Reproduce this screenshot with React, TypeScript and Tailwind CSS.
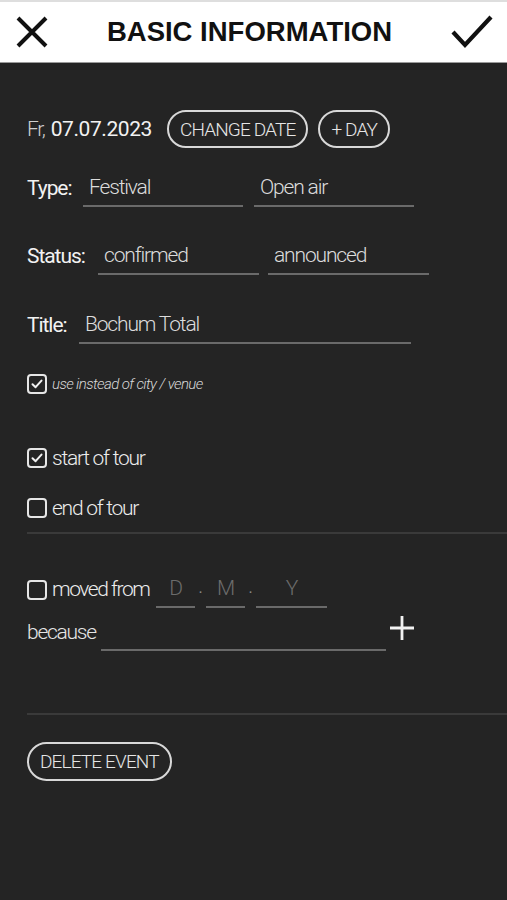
import React from "react";

function Checkbox({ checked }: { checked?: boolean }) {
  return (
    <div className="w-[20px] h-[20px] rounded-[4px] border-2 border-[#e6e6e6] flex items-center justify-center shrink-0">
      {checked && (
        <svg width="14" height="14" viewBox="0 0 14 14" fill="none">
          <path d="M2.5 7.2 L5.6 10.2 L11.5 3.6" stroke="#f0f0f0" strokeWidth="2" strokeLinecap="round" strokeLinejoin="round" />
        </svg>
      )}
    </div>
  );
}

function Field({ w, text, placeholder, center }: { w: string; text?: string; placeholder?: string; center?: boolean }) {
  return (
    <div className={`${w} h-[37px] border-b-2 border-[#6a6a6a] flex items-center ${center ? "justify-center" : "pl-[6px]"} text-[21px] leading-none font-light ${placeholder ? "text-[#6c6c6c]" : "text-[#dcdcdc]"} tracking-[-0.055em]`}>
      {text ?? placeholder}
    </div>
  );
}

const pill =
  "h-[38px] px-[10px] rounded-full border-2 border-[#d8d8d8] flex items-center text-[19px] leading-none font-light text-[#e6e6e6] tracking-[-0.045em]";

export default function App() {
  return (
    <div className="w-[507px] h-[900px] bg-[#242424] overflow-hidden" style={{ fontFamily: "Roboto, 'Liberation Sans', sans-serif" }}>
      {/* Header */}
      <div className="h-[63px] bg-white border-t-2 border-b border-t-[#dedede] border-b-[#9a9a9a] flex items-center justify-between pl-[16px] pr-[14px]">
        <svg width="32" height="32" viewBox="0 0 32 32" fill="none">
          <path d="M2 2 L30 30 M30 2 L2 30" stroke="#111" strokeWidth="4" />
        </svg>
        <div className="text-[27.5px] font-bold text-[#111] leading-none" style={{ fontFamily: "'Liberation Sans', Arial, sans-serif" }}>
          BASIC INFORMATION
        </div>
        <svg width="42" height="34" viewBox="0 0 42 34" fill="none">
          <path d="M2 17 L14 30 L40 2" stroke="#111" strokeWidth="4.2" />
        </svg>
      </div>

      <div className="pl-[27px]">
        {/* Date row */}
        <div className="mt-[47px] flex items-center h-[38px]">
          <span className="text-[21px] leading-none font-light text-[#cfcfcf] tracking-[-0.06em]">Fr,</span>
          <span className="ml-[6px] text-[21px] leading-none text-[#f2f2f2] tracking-[-0.02em]">07.07.2023</span>
          <div className={`ml-[15px] ${pill} px-[11px]`}>CHANGE DATE</div>
          <div className={`ml-[10px] ${pill} px-[11px]`}>+ DAY</div>
        </div>

        {/* Type */}
        <div className="mt-[22px] flex items-center">
          <span className="w-[56px] text-[21px] leading-none text-[#f2f2f2] tracking-[-0.05em]">Type:</span>
          <Field w="w-[160px]" text="Festival" />
          <div className="w-[11px]" />
          <Field w="w-[160px]" text="Open air" />
        </div>

        {/* Status */}
        <div className="mt-[31px] flex items-center">
          <span className="w-[71px] text-[21px] leading-none text-[#f2f2f2] tracking-[-0.05em]">Status:</span>
          <Field w="w-[161px]" text="confirmed" />
          <div className="w-[9px]" />
          <Field w="w-[161px]" text="announced" />
        </div>

        {/* Title */}
        <div className="mt-[32px] flex items-center">
          <span className="w-[52px] text-[21px] leading-none text-[#f2f2f2] tracking-[-0.05em]">Title:</span>
          <Field w="w-[332px]" text="Bochum Total" />
        </div>

        {/* use instead */}
        <div className="mt-[30px] h-[20px] flex items-center gap-[5px]">
          <Checkbox checked />
          <span className="text-[15px] leading-none italic font-light text-[#d8d8d8] tracking-[-0.04em]">use instead of city / venue</span>
        </div>

        {/* start of tour */}
        <div className="mt-[54px] h-[20px] flex items-center gap-[5px]">
          <Checkbox checked />
          <span className="text-[21px] leading-none font-light text-[#ececec] tracking-[-0.06em]">start of tour</span>
        </div>

        {/* end of tour */}
        <div className="mt-[30px] h-[20px] flex items-center gap-[5px]">
          <Checkbox />
          <span className="text-[21px] leading-none font-light text-[#ececec] tracking-[-0.06em]">end of tour</span>
        </div>

        <div className="mt-[14px] h-[2px] bg-[#3a3a3a]" />

        {/* moved from */}
        <div className="mt-[37px] flex items-center">
          <Checkbox />
          <span className="ml-[5px] w-[104px] text-[21px] leading-none font-light text-[#ececec] tracking-[-0.07em]">moved from</span>
          <Field w="w-[39px]" placeholder="D" center />
          <span className="w-[11px] text-center text-[16px] text-[#8a8a8a] self-end mb-[8px]">.</span>
          <Field w="w-[39px]" placeholder="M" center />
          <span className="w-[11px] text-center text-[16px] text-[#8a8a8a] self-end mb-[8px]">.</span>
          <Field w="w-[71px]" placeholder="Y" center />
        </div>

        {/* because */}
        <div className="mt-[6px] flex items-center">
          <span className="w-[74px] text-[21px] leading-none font-light text-[#e6e6e6] tracking-[-0.06em]">because</span>
          <Field w="w-[285px]" text="" />
          <svg width="26" height="26" viewBox="0 0 26 26" fill="none" className="ml-[3px] mt-[-10px]">
            <path d="M13 1 V25 M1 13 H25" stroke="#f2f2f2" strokeWidth="2.8" />
          </svg>
        </div>

        <div className="mt-[62px] h-[2px] bg-[#3a3a3a]" />

        {/* delete */}
        <div className="mt-[27px] flex">
          <div className={`${pill} h-[39px] px-[11px]`}>DELETE EVENT</div>
        </div>
      </div>
    </div>
  );
}
